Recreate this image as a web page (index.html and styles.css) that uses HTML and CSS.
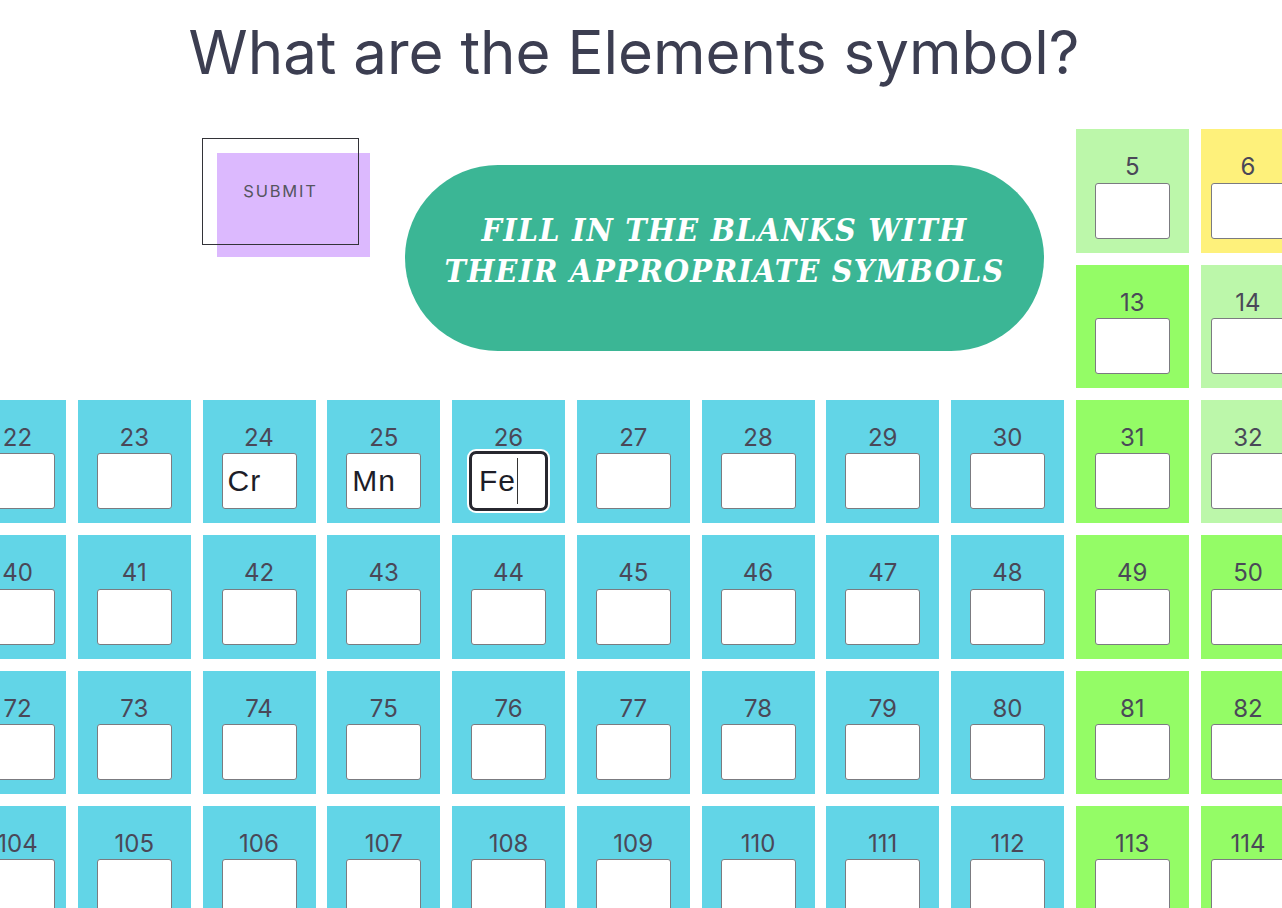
FILE: index.html
```html
<!DOCTYPE html>
<html lang="en">
<head>
<meta charset="utf-8">
<title>What are the Elements symbol?</title>
<link rel="stylesheet" href="styles.css">
</head>
<body>
<main class="page">
  <h1 class="title">What are the Elements symbol?</h1>
  <section class="board">
    <div class="intro">
      <button class="submit" type="button">SUBMIT</button>
      <div class="pill"><p>FILL IN THE BLANKS WITH<br>THEIR APPROPRIATE SYMBOLS</p></div>
    </div>
    <div class="cell metalloid"><span class="num">5</span><input class="sym" type="text"></div>
    <div class="cell nonmetal"><span class="num">6</span><input class="sym" type="text"></div>
    <div class="cell post"><span class="num">13</span><input class="sym" type="text"></div>
    <div class="cell metalloid"><span class="num">14</span><input class="sym" type="text"></div>

    <div class="cell trans"><span class="num">22</span><input class="sym" type="text"></div>
    <div class="cell trans"><span class="num">23</span><input class="sym" type="text"></div>
    <div class="cell trans"><span class="num">24</span><input class="sym" type="text" value="Cr"></div>
    <div class="cell trans"><span class="num">25</span><input class="sym" type="text" value="Mn"></div>
    <div class="cell trans"><span class="num">26</span><div class="sym sym-focus" role="textbox">Fe<span class="caret"></span></div></div>
    <div class="cell trans"><span class="num">27</span><input class="sym" type="text"></div>
    <div class="cell trans"><span class="num">28</span><input class="sym" type="text"></div>
    <div class="cell trans"><span class="num">29</span><input class="sym" type="text"></div>
    <div class="cell trans"><span class="num">30</span><input class="sym" type="text"></div>
    <div class="cell post"><span class="num">31</span><input class="sym" type="text"></div>
    <div class="cell metalloid"><span class="num">32</span><input class="sym" type="text"></div>

    <div class="cell trans"><span class="num">40</span><input class="sym" type="text"></div>
    <div class="cell trans"><span class="num">41</span><input class="sym" type="text"></div>
    <div class="cell trans"><span class="num">42</span><input class="sym" type="text"></div>
    <div class="cell trans"><span class="num">43</span><input class="sym" type="text"></div>
    <div class="cell trans"><span class="num">44</span><input class="sym" type="text"></div>
    <div class="cell trans"><span class="num">45</span><input class="sym" type="text"></div>
    <div class="cell trans"><span class="num">46</span><input class="sym" type="text"></div>
    <div class="cell trans"><span class="num">47</span><input class="sym" type="text"></div>
    <div class="cell trans"><span class="num">48</span><input class="sym" type="text"></div>
    <div class="cell post"><span class="num">49</span><input class="sym" type="text"></div>
    <div class="cell post"><span class="num">50</span><input class="sym" type="text"></div>

    <div class="cell trans"><span class="num">72</span><input class="sym" type="text"></div>
    <div class="cell trans"><span class="num">73</span><input class="sym" type="text"></div>
    <div class="cell trans"><span class="num">74</span><input class="sym" type="text"></div>
    <div class="cell trans"><span class="num">75</span><input class="sym" type="text"></div>
    <div class="cell trans"><span class="num">76</span><input class="sym" type="text"></div>
    <div class="cell trans"><span class="num">77</span><input class="sym" type="text"></div>
    <div class="cell trans"><span class="num">78</span><input class="sym" type="text"></div>
    <div class="cell trans"><span class="num">79</span><input class="sym" type="text"></div>
    <div class="cell trans"><span class="num">80</span><input class="sym" type="text"></div>
    <div class="cell post"><span class="num">81</span><input class="sym" type="text"></div>
    <div class="cell post"><span class="num">82</span><input class="sym" type="text"></div>

    <div class="cell trans"><span class="num">104</span><input class="sym" type="text"></div>
    <div class="cell trans"><span class="num">105</span><input class="sym" type="text"></div>
    <div class="cell trans"><span class="num">106</span><input class="sym" type="text"></div>
    <div class="cell trans"><span class="num">107</span><input class="sym" type="text"></div>
    <div class="cell trans"><span class="num">108</span><input class="sym" type="text"></div>
    <div class="cell trans"><span class="num">109</span><input class="sym" type="text"></div>
    <div class="cell trans"><span class="num">110</span><input class="sym" type="text"></div>
    <div class="cell trans"><span class="num">111</span><input class="sym" type="text"></div>
    <div class="cell trans"><span class="num">112</span><input class="sym" type="text"></div>
    <div class="cell post"><span class="num">113</span><input class="sym" type="text"></div>
    <div class="cell post"><span class="num">114</span><input class="sym" type="text"></div>
  </section>
</main>
</body>
</html>
```
FILE: styles.css
```css
html {
  background: #ffffff;
}

html, body {
  margin: 0;
  padding: 0;
  overflow: hidden;
  height: 908px;
}

.page {
  width: 1282px;
}

.title {
  margin: 0;
  padding: 7px 14px 0 0;
  height: 122.4px;
  box-sizing: content-box;
  font-family: "Inter", "Open Sans", sans-serif;
  font-weight: 400;
  font-size: 60px;
  line-height: 90px;
  text-align: center;
  color: #3c3e51;
}

.board {
  display: grid;
  grid-template-columns: 97px repeat(9, 113px) 95px;
  grid-auto-rows: 123.5px;
  column-gap: 11.75px;
  row-gap: 11.8px;
  margin-left: -31px;
}

.intro {
  grid-column: 1 / 10;
  grid-row: 1 / 3;
  display: flex;
  align-items: flex-start;
}

.submit {
  position: relative;
  margin: 8.3px 0 0 233px;
  width: 157px;
  height: 107px;
  padding: 0;
  border: 1px solid #333338;
  background: transparent;
  font-family: "Inter", "Open Sans", sans-serif;
  font-size: 16.5px;
  letter-spacing: 1.8px;
  color: #55555f;
  cursor: pointer;
}

.submit::before {
  content: "";
  position: absolute;
  top: 14px;
  left: 14px;
  right: -12px;
  bottom: -13px;
  background: #dcb9fe;
  z-index: -1;
}

.pill {
  margin: 35.6px 0 0 46px;
  width: 639px;
  height: 186px;
  border-radius: 93px;
  background: #3bb695;
  display: flex;
  align-items: center;
  justify-content: center;
}

.pill p {
  margin: 0 0 14px;
  font-family: "DejaVu Serif Condensed", "DejaVu Serif", serif;
  font-style: italic;
  font-weight: 700;
  font-size: 32px;
  line-height: 41px;
  letter-spacing: 1.2px;
  text-align: center;
  color: #ffffff;
}

.cell {
  display: flex;
  flex-direction: column;
  align-items: center;
  padding-top: 23px;
  box-sizing: border-box;
}

.trans { background: #62d5e7; }
.post { background: #94fc66; }
.metalloid { background: #bcf7aa; }
.nonmetal { background: #fef17b; }

.num {
  font-family: "Inter", "Open Sans", sans-serif;
  font-size: 24px;
  line-height: 30px;
  color: #4a4858;
}

.sym {
  margin-top: 0.5px;
  width: 75px;
  height: 56px;
  box-sizing: border-box;
  border: 1px solid #7b7b80;
  border-radius: 3px;
  background: #ffffff;
  padding: 0 5px;
  font-family: "Liberation Sans", Arial, sans-serif;
  font-size: 30px;
  letter-spacing: 1px;
  color: #1d1d28;
  outline: none;
}

.sym-focus {
  display: flex;
  align-items: center;
  border-radius: 5px;
  outline: 3px solid #27272f;
  outline-offset: -1px;
  box-shadow: 0 0 0 4px #ffffff;
  padding-left: 7px;
}

.caret {
  display: inline-block;
  width: 1px;
  height: 46px;
  margin-left: 1px;
  background: #333;
}
```
